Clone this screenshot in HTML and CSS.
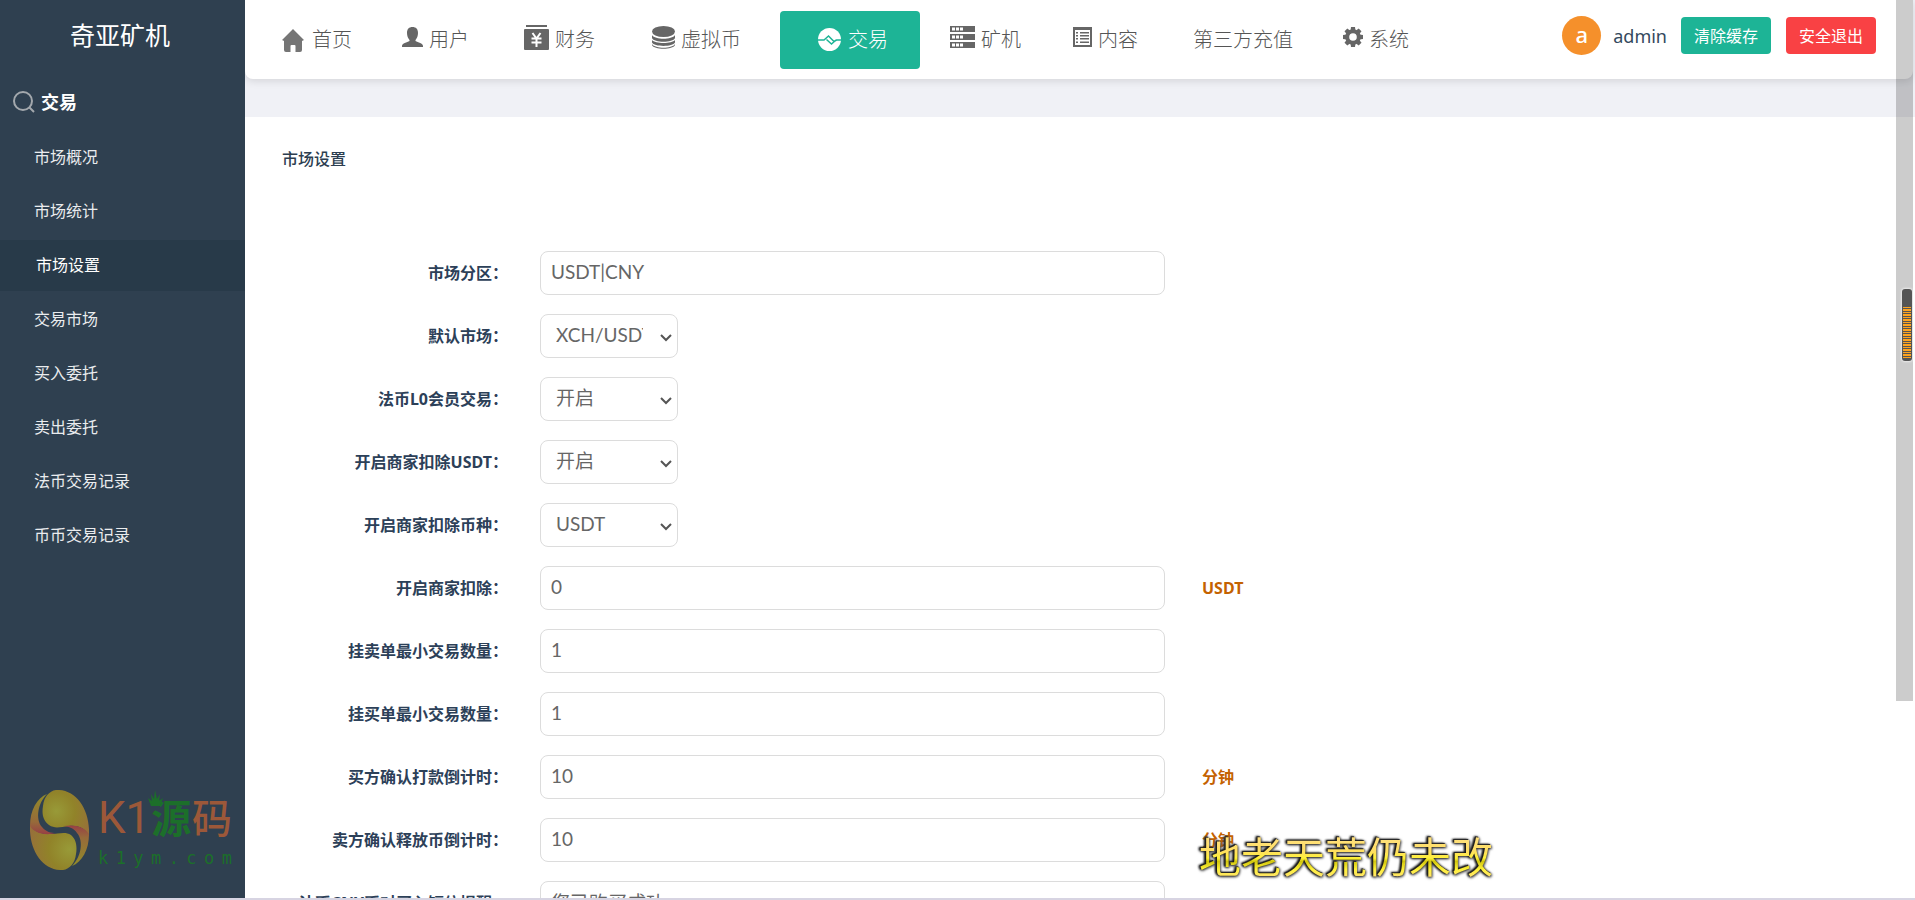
FILE: index.html
```html
<!DOCTYPE html>
<html lang="zh-CN">
<head>
<meta charset="utf-8">
<meta name="viewport" content="width=device-width, initial-scale=1">
<title>市场设置</title>
<link rel="stylesheet" href="styles.css">
</head>
<body>
<div class="shell">
  <aside class="sidebar">
    <div class="brand">奇亚矿机</div>
    <div class="section">
      <svg width="22" height="22" viewBox="0 0 22 22" fill="none" stroke="#a3a8ad" stroke-width="2"><circle cx="10" cy="10" r="9"/><path d="M16.500 16.500L21 21"/></svg>
      <span>交易</span>
    </div>
    <nav class="menu">
      <a href="#">市场概况</a>
      <a href="#">市场统计</a>
      <a href="#" class="current">市场设置</a>
      <a href="#">交易市场</a>
      <a href="#">买入委托</a>
      <a href="#">卖出委托</a>
      <a href="#">法币交易记录</a>
      <a href="#">币币交易记录</a>
    </nav>
    <div class="mark">
      <svg class="mark-logo" width="60" height="80" viewBox="0 0 60 80">
        <defs>
          <radialGradient id="g1" cx=".3" cy=".45" r=".8"><stop offset="0" stop-color="#989a38"/><stop offset=".5" stop-color="#918329"/><stop offset="1" stop-color="#97703a"/></radialGradient>
          <radialGradient id="g2" cx=".85" cy=".55" r=".9"><stop offset="0" stop-color="#989a38"/><stop offset=".5" stop-color="#918329"/><stop offset="1" stop-color="#97703a"/></radialGradient>
          <linearGradient id="g3" x1="0" y1="0" x2="0" y2="1"><stop offset="0" stop-color="#918c29"/><stop offset=".7" stop-color="#976a3a"/><stop offset="1" stop-color="#983f45"/></linearGradient>
          <linearGradient id="g4" x1="0" y1="1" x2="0" y2="0"><stop offset="0" stop-color="#918c29"/><stop offset=".7" stop-color="#976a3a"/><stop offset="1" stop-color="#983f45"/></linearGradient>
        </defs>
        <path fill="url(#g1)" d="M26 0C45-1 58 17 59 39V47C56 38 48 35 39 36C30 37 25 39 19 35C12 30 12 22 13 16C14 7 19 1 26 0Z"/>
        <path fill="url(#g2)" d="M33 80C14 81 1 63 0 41V34C3 41 10 44 20 44C29 44 35 41 41 45C47 50 47 58 46 64C45 73 40 79 33 80Z"/>
        <path fill="url(#g3)" d="M17 4C8 13 5 29 12 37C16 42 21 43 26 43C15 46 4 43 0 36C0 20 7 8 17 4Z"/>
        <path fill="url(#g4)" d="M42 76C51 67 54 51 47 43C44 38 39 37 34 36C45 34 55 37 59 44C59 60 52 72 42 76Z"/>
      </svg>
      <div class="mark-text">
        <div class="mark-name"><span class="mark-k">K1</span><span class="mark-green">源</span><span>码</span>
          <svg class="crown" width="15" height="16" viewBox="0 0 15 16" fill="#1c6f2a"><path d="M3 16L0 8L4 11L3 4L6 9L7 0L9 9L12 4L11 11L15 8L12 16Z"/></svg>
        </div>
        <div class="mark-url"><span>k</span><span>1</span><span>y</span><span>m</span><span>.</span><span>c</span><span>o</span><span>m</span></div>
      </div>
    </div>
  </aside>

  <main class="main">
    <header class="topbar">
      <nav class="nav">
        <a href="#"><svg width="24" height="30" viewBox="0 0 24 30"><path fill="#757575" d="M11 4L22 15L20 16V25Q20 27 18 27H13.500V21Q13.500 20 12.500 20H9.500Q8.500 20 8.500 21V27H4Q2 27 2 25V16L0 15Z"/></svg>首页</a>
        <a href="#"><svg width="21" height="30" viewBox="0 0 21 30"><path fill="#666" d="M10.500 2C14 2 16 4 16 8C16 11 15 13 13.500 15V16C16 17.500 21 18 21 21V22H0V21C0 18 5 17.500 7.500 16V15C6 13 5 11 5 8C5 4 7 2 10.500 2Z"/></svg>用户</a>
        <a href="#"><svg width="30" height="30" viewBox="2 0 30 30"><path fill="#666" d="M9 0H30V2H9ZM8 4H31Q32 4 32 5V24Q32 25 31 25H8Q7 25 7 24V5Q7 4 8 4Z"/><path fill="none" stroke="#fff" stroke-width="2" d="M15.500 8L19.500 13.500L23.500 8M19.500 13V22M14.500 13.500H24.500M14.500 17.500H24.500"/></svg>财务</a>
        <a href="#"><svg width="30" height="30" viewBox="1 0 30 30" fill="#666"><ellipse cx="19.500" cy="6.500" rx="11.500" ry="5.500"/><path d="M8 10C11 15 28 15 31 10V13C29 18 10 18 8 13ZM8 15C11 19 28 19 31 15V17.500C29 22 10 22 8 17.500ZM8 19C11 24 28 24 31 19V20C29 25 10 25 8 20Z"/></svg>虚拟币</a>
        <a href="#" class="on"><svg width="24" height="30" viewBox="0 0 24 30"><circle cx="11.500" cy="14.500" r="11.500" fill="#fff"/><path fill="none" stroke="#1db496" stroke-width="1.500" d="M0 15H6L10.500 11L16 16.500L18.500 15H23M8.500 14.500L13.500 19L18 15"/></svg>交易</a>
        <a href="#"><svg width="25" height="30" viewBox="0 0 25 30"><path fill="#666" d="M0 1H25V7H0ZM0 9H25V15H0ZM0 17H25V23H0Z"/><path stroke="#fff" stroke-width="3" stroke-dasharray="3 1" d="M2 4H13M2 12H13M2 20H13"/></svg>矿机</a>
        <a href="#"><svg width="21" height="30" viewBox="0 0 21 30"><path fill="none" stroke="#666" stroke-width="2" d="M3 22V3H20V22"/><path fill="#666" d="M2 2H21V5H2ZM2 20H21V22H2ZM5 7H7V8.500H5ZM9 7H18V8.500H9ZM5 10H7V11.500H5ZM9 10H18V11.500H9ZM5 13H7V14.500H5ZM9 13H18V14.500H9ZM5 16.500H7V18H5ZM9 16.500H18V18H9Z"/></svg>内容</a>
        <a href="#" class="plain">第三方充值</a>
        <a href="#"><svg width="20" height="30" viewBox="0 0 20 30"><g fill="#666"><path id="t" d="M8 2H12L12.500 6H7.500Z"/><use href="#t" transform="rotate(45 10 12)"/><use href="#t" transform="rotate(90 10 12)"/><use href="#t" transform="rotate(135 10 12)"/><use href="#t" transform="rotate(180 10 12)"/><use href="#t" transform="rotate(225 10 12)"/><use href="#t" transform="rotate(270 10 12)"/><use href="#t" transform="rotate(315 10 12)"/></g><circle cx="10" cy="12" r="5.800" fill="none" stroke="#666" stroke-width="4"/></svg>系统</a>
      </nav>
      <div class="account">
        <span class="avatar">a</span>
        <span class="user">admin</span>
        <button type="button" class="btn">清除缓存</button>
        <button type="button" class="btn danger">安全退出</button>
      </div>
    </header>

    <section class="panel">
      <h1 class="title">市场设置</h1>
      <form class="form">
        <label for="f1">市场分区：</label><input id="f1" type="text" value="USDT|CNY">
        <label for="f2">默认市场：</label><select id="f2"><option>XCH/USDT</option></select>
        <label for="f3">法币L0会员交易：</label><select id="f3"><option>开启</option><option>关闭</option></select>
        <label for="f4">开启商家扣除USDT：</label><select id="f4"><option>开启</option><option>关闭</option></select>
        <label for="f5">开启商家扣除币种：</label><select id="f5"><option>USDT</option></select>
        <label for="f6">开启商家扣除：</label><input id="f6" type="text" value="0"><span class="unit">USDT</span>
        <label for="f7">挂卖单最小交易数量：</label><input id="f7" type="text" value="1">
        <label for="f8">挂买单最小交易数量：</label><input id="f8" type="text" value="1">
        <label for="f9">买方确认打款倒计时：</label><input id="f9" type="text" value="10"><span class="unit">分钟</span>
        <label for="f10">卖方确认释放币倒计时：</label><input id="f10" type="text" value="10"><span class="unit">分钟</span>
        <label for="f11">法币CNY币对买入短信提醒：</label><input id="f11" type="text" value="您已购买成功">
      </form>
    </section>
  </main>
</div>
<div class="strip"></div>
<div class="thumb"></div>
<div class="gauge"><div class="gauge-fill"></div></div>
<div class="lyric">地老天荒仍未改</div>
</body>
</html>
```

FILE: styles.css
```css
* { box-sizing: border-box; }
body {
  margin: 0;
  height: 100vh;
  overflow: hidden;
  position: relative;
  display: flex;
  flex-direction: column;
  font: 16px/24px "Noto Sans", "Noto Sans CJK SC", sans-serif;
  color: #34495e;
  background: #fff;
}
a { color: inherit; text-decoration: none; }
.shell { flex: 1; min-height: 0; display: flex; overflow: hidden; }

.sidebar {
  flex: 0 0 245px;
  position: relative;
  background: #2f4050;
  color: #fff;
}
.brand { padding: 17px 0 0 70px; font-size: 25px; line-height: 36px; }
.section {
  display: flex;
  align-items: center;
  gap: 6px;
  padding: 36px 0 0 13px;
  font-size: 18px;
  line-height: 26px;
  font-weight: 700;
}
.menu {
  display: flex;
  flex-direction: column;
  gap: 3px;
  margin-top: 17px;
}
.menu a { padding: 0 0 0 34px; line-height: 51px; color: #eaecee; }
.menu .current { padding-left: 36px; background: #283a49; color: #fff; }

.mark {
  position: absolute;
  left: 30px;
  bottom: 28px;
  display: flex;
  gap: 8px;
  color: #9c5839;
}
.mark-text { width: 134px; }
.mark-name { position: relative; display: flex; justify-content: space-between; font-size: 40px; line-height: 56px; font-weight: 500; }
.mark-k { font-family: Roboto, sans-serif; font-size: 44px; font-weight: 400; }
.mark-green { color: #1c6f2a; font-weight: 700; }
.crown { position: absolute; left: 50px; top: 0; }
.mark-url { display: flex; justify-content: space-between; font: 17px/24px "DejaVu Sans Mono", monospace; color: #1c6f2a; }

.main { flex: 1; min-width: 0; display: flex; flex-direction: column; background: #f0f1f6; }
.topbar {
  flex: none;
  display: flex;
  justify-content: space-between;
  margin-right: 2px;
  padding: 11px 37px 10px 12px;
  background: #fff;
  border-radius: 0 0 8px 8px;
  box-shadow: 0 2px 8px rgba(0, 0, 0, .12);
}
.nav { display: flex; height: 58px; font-size: 20px; font-weight: 300; color: #555; }
.nav a {
  display: flex;
  align-items: center;
  gap: 6px;
  padding: 0 25px;
  white-space: nowrap;
}
.nav .plain { padding-left: 30px; }
.nav .on {
  margin: 0 5px 0 14px;
  padding: 0 32px 0 38px;
  border-radius: 4px;
  background: #1db496;
  color: #fff;
}
.account { display: flex; align-items: center; height: 49px; }
.avatar {
  width: 39px;
  height: 39px;
  border-radius: 50%;
  background: #f5902b;
  color: #fff;
  font-size: 22px;
  font-weight: 500;
  line-height: 36px;
  text-align: center;
}
.user { margin: 0 14px 0 12px; font-size: 18px; }
.btn {
  width: 90px;
  height: 37px;
  padding: 0;
  border: 0;
  border-radius: 4px;
  background: #1db496;
  color: #fff;
  font: inherit;
}
.danger { margin-left: 15px; background: #f94144; }

.panel { flex: 1; min-height: 0; overflow: hidden; margin-top: 38px; padding: 30px 37px; background: #fff; }
.title { margin: 0; font-size: 16px; line-height: 24px; font-weight: 500; color: #2c3e50; }
.form {
  display: grid;
  grid-template-columns: 226px 625px 1fr;
  grid-auto-rows: 44px;
  gap: 19px 32px;
  margin-top: 80px;
  align-items: center;
}
.form label {
  grid-column: 1;
  justify-self: end;
  font-family: "Noto Sans", "Noto Sans CJK SC", sans-serif;
  font-weight: 700;
  color: #2c4058;
  white-space: nowrap;
}
.form input, .form select {
  grid-column: 2;
  height: 44px;
  border: 1px solid #dcdcdc;
  border-radius: 8px;
  background: #fff;
  color: #666;
  font: 400 19px/28px Lato, "Noto Sans CJK SC", sans-serif;
}
.form input { width: 100%; padding: 0 10px 3px; }
.form select {
  width: 138px;
  padding: 0 34px 3px 15px;
  appearance: none;
  background: #fff url("data:image/svg+xml,%3Csvg xmlns='http://www.w3.org/2000/svg' width='12' height='8' fill='none' stroke='%23555' stroke-width='2'%3E%3Cpath d='M1 1l5 5 5-5'/%3E%3C/svg%3E") no-repeat right 5px top 19px;
}
.form select, .form #f11 { font-weight: 400; }
.unit { grid-column: 3; margin-left: 5px; font-weight: 700; color: #c46200; }

.strip { flex: 0 0 2px; background: #d7d4e2; }

.thumb {
  position: absolute;
  top: 0;
  right: 2px;
  width: 17px;
  height: 701px;
  background: rgba(0, 0, 0, .2);
}
.gauge {
  position: absolute;
  top: 289px;
  right: 3px;
  width: 10px;
  height: 72px;
  padding: 18px 1px 3px;
  border-radius: 3px;
  background: #555;
  box-shadow: 0 0 2px 1px rgba(255, 255, 255, .6);
}
.gauge-fill { height: 100%; background: repeating-linear-gradient(#ffa420 0 1px, #555 1px 2px, #ffa420 2px 4px, #555 4px 5px); }
.lyric {
  position: absolute;
  left: 1199px;
  bottom: 15px;
  font-size: 42px;
  line-height: 56px;
  white-space: nowrap;
  color: transparent;
  background: linear-gradient(#ffe07a 20%, #ffdf60 40%, #fff23a 52%, #d2c60e 58%, #fff23a 72%, #ffe36a 85%);
  background-clip: text;
  -webkit-background-clip: text;
  filter: drop-shadow(-1px 0 1px #111) drop-shadow(-1px -1px 0 #333) drop-shadow(1px 1px 1px #555);
}
```
